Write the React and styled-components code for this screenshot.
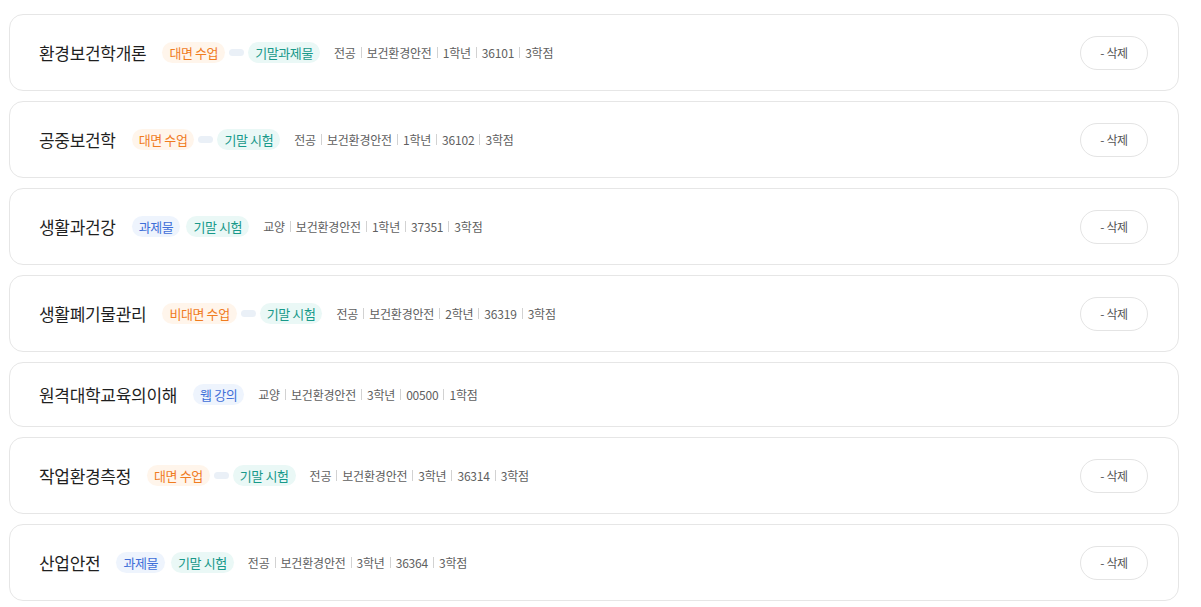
import React from 'react';
import styled, { createGlobalStyle } from 'styled-components';

const GlobalStyle = createGlobalStyle`
    html, body {
        margin: 0;
        padding: 0;
        background: #ffffff;
    }
    body {
        font-family: "Noto Sans CJK KR", "Noto Sans", sans-serif;
        color: #222;
    }
`;

const List = styled.div`
    display: flex;
    flex-direction: column;
    gap: 10px;
    padding: 14px 22px 0 9px;
`;

const Card = styled.div`
    display: flex;
    align-items: center;
    justify-content: space-between;
    padding: 20px 30px 20px 29px;
    border: 1px solid #e6e6e6;
    border-radius: 14px;
    background: #fff;
`;

const Left = styled.div`
    display: flex;
    align-items: center;
    height: ${(p) => (p.$short ? '23px' : '35px')};
`;

const Title = styled.div`
    font-size: 17px;
    letter-spacing: -0.3px;
    color: #1f1f1f;
    margin-right: 16px;
    line-height: 23px;
`;

const badgeColors = {
    orange: { fg: '#f07c1f', bg: '#fff5eb' },
    teal: { fg: '#18998a', bg: '#eaf8f6' },
    blue: { fg: '#3f6fd8', bg: '#eef4fd' },
};

const Badge = styled.span`
    display: inline-flex;
    align-items: center;
    height: 21px;
    padding: 0 7px;
    border-radius: 11px;
    font-size: 13px;
    letter-spacing: -0.4px;
    color: ${(p) => badgeColors[p.$tone].fg};
    background: ${(p) => badgeColors[p.$tone].bg};
    & + & {
        margin-left: 6px;
    }
`;

const Link = styled.span`
    display: inline-block;
    width: 15px;
    height: 7px;
    border-radius: 4px;
    background: #eaf0f7;
    margin: 0 4px;
`;

const Badges = styled.div`
    display: flex;
    align-items: center;
    margin-right: 14px;
`;

const Meta = styled.div`
    display: flex;
    align-items: center;
    font-size: 12px;
    letter-spacing: -0.2px;
    color: #606060;
`;

const Sep = styled.span`
    display: inline-block;
    width: 1px;
    height: 11px;
    background: #d2d2d2;
    margin: 0 5px;
`;

const DeleteButton = styled.button`
    width: 68px;
    height: 34px;
    border: 1px solid #e4e4e4;
    border-radius: 17px;
    background: #fff;
    font-family: inherit;
    font-size: 12px;
    letter-spacing: -0.3px;
    color: #555;
    cursor: pointer;
    padding: 0;
`;

const courses = [
    { title: '환경보건학개론', badges: [['orange', '대면 수업'], ['teal', '기말과제물']], link: true, meta: ['전공', '보건환경안전', '1학년', '36101', '3학점'], del: true },
    { title: '공중보건학', badges: [['orange', '대면 수업'], ['teal', '기말 시험']], link: true, meta: ['전공', '보건환경안전', '1학년', '36102', '3학점'], del: true },
    { title: '생활과건강', badges: [['blue', '과제물'], ['teal', '기말 시험']], link: false, meta: ['교양', '보건환경안전', '1학년', '37351', '3학점'], del: true },
    { title: '생활폐기물관리', badges: [['orange', '비대면 수업'], ['teal', '기말 시험']], link: true, meta: ['전공', '보건환경안전', '2학년', '36319', '3학점'], del: true },
    { title: '원격대학교육의이해', badges: [['blue', '웹 강의']], link: false, meta: ['교양', '보건환경안전', '3학년', '00500', '1학점'], del: false },
    { title: '작업환경측정', badges: [['orange', '대면 수업'], ['teal', '기말 시험']], link: true, meta: ['전공', '보건환경안전', '3학년', '36314', '3학점'], del: true },
    { title: '산업안전', badges: [['blue', '과제물'], ['teal', '기말 시험']], link: false, meta: ['전공', '보건환경안전', '3학년', '36364', '3학점'], del: true },
];

const App = () => {
    return (
        <>
            <GlobalStyle />
            <List>
                {courses.map((c) => (
                    <Card key={c.title}>
                        <Left $short={!c.del}>
                            <Title>{c.title}</Title>
                            <Badges>
                                {c.badges.map(([tone, label], i) => (
                                    <React.Fragment key={label}>
                                        {i > 0 && c.link && <Link />}
                                        <Badge $tone={tone}>{label}</Badge>
                                    </React.Fragment>
                                ))}
                            </Badges>
                            <Meta>
                                {c.meta.map((m, i) => (
                                    <React.Fragment key={i}>
                                        {i > 0 && <Sep />}
                                        <span>{m}</span>
                                    </React.Fragment>
                                ))}
                            </Meta>
                        </Left>
                        {c.del && <DeleteButton>- 삭제</DeleteButton>}
                    </Card>
                ))}
            </List>
        </>
    );
};

export default App;
